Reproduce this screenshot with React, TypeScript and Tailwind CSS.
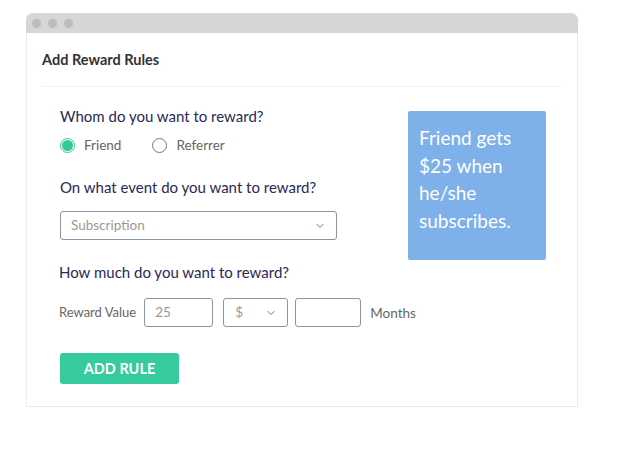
import { ChevronDown } from 'lucide-react'

export default function App() {
  return (
    <div className="w-[643px] h-[449px] bg-white pt-[13px] pl-[26px] font-['Lato',sans-serif]">
      {/* Window */}
      <div className="w-[552px] h-[394px] flex flex-col rounded-t-[7px] border border-[#ececec] border-t-0 bg-white">
        {/* Title bar */}
        <div className="h-[20px] -mx-px bg-[#d6d6d6] rounded-t-[7px] flex items-center gap-[7px] pl-[6px]">
          <span className="w-[9px] h-[9px] rounded-full bg-[#bcbcbc]" />
          <span className="w-[9px] h-[9px] rounded-full bg-[#bcbcbc]" />
          <span className="w-[9px] h-[9px] rounded-full bg-[#bcbcbc]" />
        </div>

        <div className="px-[15px]">
          <h1 className="h-[54px] flex items-center pt-[1px] text-[14.5px] font-bold text-[#333] border-b border-[#eef3f8]">
            Add Reward Rules
          </h1>
        </div>

        <div className="flex pl-[33px] pt-[18px]">
          {/* Form */}
          <div className="w-[348px] shrink-0">
            <p className="text-[15px] text-[#2a2857] leading-[22px]">Whom do you want to reward?</p>
            <div className="flex items-center mt-[8px] h-[20px] text-[13.5px] text-[#666]">
              <span className="w-[15px] h-[15px] rounded-full border border-[#34c99b] flex items-center justify-center">
                <span className="w-[11px] h-[11px] rounded-full bg-[#34c99b]" />
              </span>
              <span className="ml-[9px]">Friend</span>
              <span className="ml-[31px] w-[15px] h-[15px] rounded-full border border-[#777]" />
              <span className="ml-[9px]">Referrer</span>
            </div>

            <p className="mt-[21px] text-[15px] text-[#2a2857] leading-[22px]">On what event do you want to reward?</p>
            <div className="mt-[13px] w-[277px] h-[29px] rounded-[3px] border border-[#8c93a6] flex items-center justify-between pl-[10px] pr-[10px] text-[13.5px] text-[#999]">
              <span>Subscription</span>
              <ChevronDown size={12} strokeWidth={2} className="text-[#6b7285]" />
            </div>

            <p className="mt-[21px] -ml-px text-[15px] text-[#2a2857] leading-[22px]">How much do you want to reward?</p>
            <div className="mt-[15px] -ml-px flex items-center h-[29px] text-[13.5px] text-[#666] whitespace-nowrap">
              <span className="text-[13px] shrink-0">Reward Value</span>
              <span className="ml-[8px] shrink-0 w-[69px] h-[29px] rounded-[3px] border border-[#8c93a6] flex items-center pl-[10px] text-[#999]">25</span>
              <span className="ml-[10px] shrink-0 w-[65px] h-[29px] rounded-[3px] border border-[#8c93a6] flex items-center justify-between pl-[11px] pr-[10px] text-[#999]">
                <span>$</span>
                <ChevronDown size={12} strokeWidth={2} className="text-[#6b7285]" />
              </span>
              <span className="ml-[7px] shrink-0 w-[66px] h-[29px] rounded-[3px] border border-[#8c93a6]" />
              <span className="ml-[9px] mt-[2px] shrink-0">Months</span>
            </div>

            <button className="mt-[26px] w-[119px] h-[31px] rounded-[3px] bg-[#35cb9e] text-white text-[14.5px] font-bold">
              ADD RULE
            </button>
          </div>

          {/* Preview note */}
          <div className="mt-[6px] w-[138px] h-[149px] rounded-[2px] bg-[#7eb0ea] px-[11px] pt-[13px] text-white text-[19px] leading-[27.5px]">
            Friend gets $25 when he/she subscribes.
          </div>
        </div>
      </div>
    </div>
  )
}
